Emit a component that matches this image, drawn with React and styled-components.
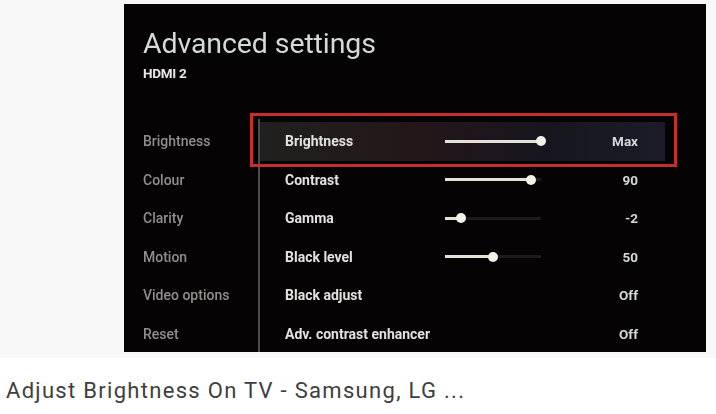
import React from 'react';
import styled, { createGlobalStyle } from 'styled-components';

const rows = [
  { side: 'Brightness', name: 'Brightness', level: 100, value: 'Max', active: true },
  { side: 'Colour', name: 'Contrast', level: 90, value: '90' },
  { side: 'Clarity', name: 'Gamma', level: 17, value: '-2' },
  { side: 'Motion', name: 'Black level', level: 50, value: '50' },
  { side: 'Video options', name: 'Black adjust', value: 'Off' },
  { side: 'Reset', name: 'Adv. contrast enhancer', value: 'Off' },
];

function App() {
  return (
    <>
      <GlobalStyle />
      <StCard>
        <StThumb>
          <StScreen>
            <StTitle>Advanced settings</StTitle>
            <StSource>HDMI 2</StSource>
            <StBody>
              <StSide>
                {rows.map((row) => (
                  <StSideItem key={row.side}>{row.side}</StSideItem>
                ))}
              </StSide>
              <StList>
                {rows.map((row) => (
                  <StRow key={row.name} $active={row.active}>
                    <StName>{row.name}</StName>
                    <StSlot>
                      {row.level !== undefined && (
                        <StTrack>
                          <StFill $level={row.level} />
                          <StKnob $level={row.level} />
                        </StTrack>
                      )}
                    </StSlot>
                    <StValue>{row.value}</StValue>
                  </StRow>
                ))}
              </StList>
            </StBody>
            <StHighlight />
          </StScreen>
        </StThumb>
        <StCaption>Adjust Brightness On TV - Samsung, LG ...</StCaption>
      </StCard>
    </>
  );
}

export default App;

const GlobalStyle = createGlobalStyle`
  html, body {
    margin: 0;
    padding: 0;
    background: #fff;
  }
`;

const StCard = styled.div`
  width: 716px;
  height: 414px;
  overflow: hidden;
  font-family: Roboto, 'Liberation Sans', sans-serif;
`;

const StThumb = styled.div`
  display: flex;
  justify-content: flex-end;
  height: 358px;
  box-sizing: border-box;
  padding: 4px 10px 6px 0;
  background: #f8f8f8;
`;

const StScreen = styled.div`
  position: relative;
  width: 582px;
  height: 348px;
  box-sizing: border-box;
  padding: 23px 0 0 19px;
  overflow: hidden;
  background: #050304;
`;

const StTitle = styled.div`
  font-size: 28.5px;
  line-height: 34px;
  letter-spacing: -0.1px;
  color: #d4dad6;
  filter: blur(0.7px);
`;

const StSource = styled.div`
  margin-top: 5px;
  font-size: 13.5px;
  line-height: 14px;
  font-weight: 700;
  letter-spacing: -0.3px;
  color: #e8e8e8;
  filter: blur(0.7px);
`;

const StBody = styled.div`
  display: flex;
  margin-top: 39px;
  height: 233px;
`;

const StSide = styled.div`
  display: flex;
  flex-direction: column;
  width: 115px;
  padding-top: 3px;
`;

const StSideItem = styled.div`
  height: 38.5px;
  line-height: 38.5px;
  font-size: 14px;
  font-weight: 500;
  color: #8f908e;
  filter: blur(0.7px);
`;

const StList = styled.div`
  display: flex;
  flex-direction: column;
  flex: 1;
  padding-top: 3px;
  border-left: 2px solid #4a4c4e;
`;

const StRow = styled.div`
  display: flex;
  align-items: center;
  flex-shrink: 0;
  height: 38.5px;
  width: 405px;
  padding-left: 25px;
  box-sizing: border-box;
  background: ${(props) =>
    props.$active ? 'linear-gradient(90deg, #20201f 0%, #241619 40%, #17161f 70%, #1b1c28 100%)' : 'transparent'};
`;

const StName = styled.div`
  width: 160px;
  flex-shrink: 0;
  font-size: 14px;
  font-weight: 700;
  color: #e2e2e0;
  white-space: nowrap;
  filter: blur(0.7px);
`;

const StSlot = styled.div`
  width: 96px;
  flex-shrink: 0;
`;

const StTrack = styled.div`
  position: relative;
  height: 3px;
  background: #1c1c1c;
`;

const StFill = styled.div`
  width: ${(props) => props.$level}%;
  height: 100%;
  background: #e4e2d8;
  filter: blur(0.5px);
`;

const StKnob = styled.div`
  position: absolute;
  top: -3.5px;
  left: ${(props) => props.$level}%;
  width: 10px;
  height: 10px;
  margin-left: -5px;
  border-radius: 50%;
  background: #f2f1ea;
  filter: blur(0.5px);
`;

const StValue = styled.div`
  width: 97px;
  flex-shrink: 0;
  text-align: right;
  font-size: 13.5px;
  font-weight: 700;
  color: #d6d7d8;
  filter: blur(0.7px);
`;

const StHighlight = styled.div`
  position: absolute;
  left: 126px;
  top: 109px;
  width: 427px;
  height: 54px;
  box-sizing: border-box;
  border: 3px solid #c62f2c;
`;

const StCaption = styled.div`
  margin: 20px 0 0 6px;
  font-size: 22px;
  line-height: 26px;
  letter-spacing: 1.3px;
  color: #3c4043;
  white-space: nowrap;
`;
